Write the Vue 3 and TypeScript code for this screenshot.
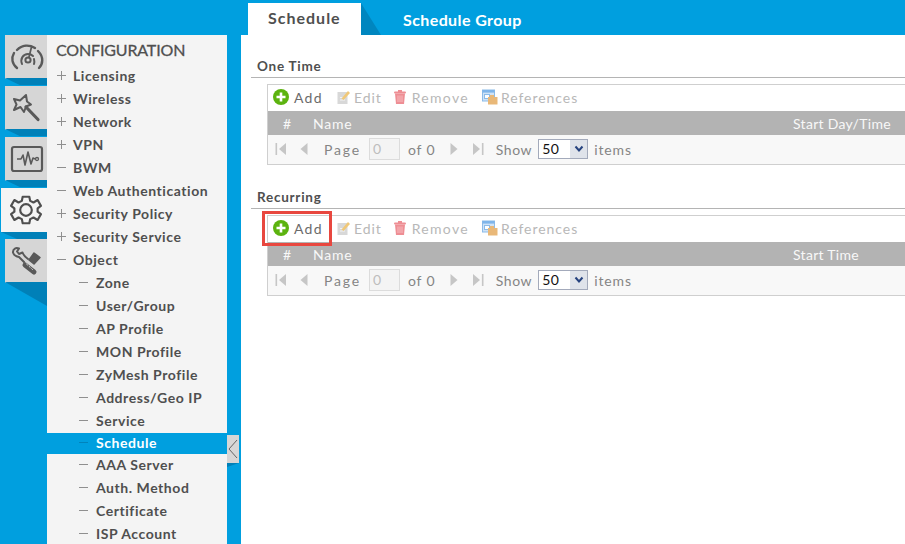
<script setup lang="ts">
const topItems = [
  { label: 'Licensing', mark: 'plus' },
  { label: 'Wireless', mark: 'plus' },
  { label: 'Network', mark: 'plus' },
  { label: 'VPN', mark: 'plus' },
  { label: 'BWM', mark: 'minus' },
  { label: 'Web Authentication', mark: 'minus' },
  { label: 'Security Policy', mark: 'plus' },
  { label: 'Security Service', mark: 'plus' },
  { label: 'Object', mark: 'minus' },
]
const subItems = ['Zone', 'User/Group', 'AP Profile', 'MON Profile', 'ZyMesh Profile', 'Address/Geo IP', 'Service', 'Schedule', 'AAA Server', 'Auth. Method', 'Certificate', 'ISP Account']
const sections = [
  { title: 'One Time', col: 'Start Day/Time', marked: false },
  { title: 'Recurring', col: 'Start Time', marked: true },
]
</script>

<template>
  <div class="page">
    <aside class="rail">
      <div class="rail-item">
        <svg viewBox="0 0 42 44" width="42" height="44" fill="none" stroke="#595959" stroke-width="2.400" stroke-linecap="round">
          <path d="M12 33C7 29 6 23 9 18M12 15C17 10 24 9.500 30 13M33 16C39 22 38 29 34 33" />
          <circle cx="23" cy="25" r="2.600" stroke-width="2" />
          <path d="M17 29C15 24 18 19 23 19C25 19 27 20 28 21M29 24C29.500 26 29.400 27.500 29 29" stroke-width="2" />
          <path d="M24 22L26.500 12" stroke-width="1.700" />
        </svg>
      </div>
      <div class="rail-item">
        <svg viewBox="0 0 42 44" width="42" height="44" fill="none" stroke="#595959" stroke-width="2" stroke-linejoin="round" stroke-linecap="round">
          <path d="M9 13L15 14.500L21 9L22 15.500L26 18.500L21 20.500L19 26L15.500 21L9 24L11.500 18.500Z" />
          <path d="M21 21L33 33.500" stroke-width="3.200" />
        </svg>
      </div>
      <div class="rail-item">
        <svg viewBox="0 0 42 44" width="42" height="44" fill="none" stroke="#595959" stroke-linejoin="round">
          <rect x="7" y="10" width="30" height="24" rx="2" stroke-width="2.200" />
          <path d="M12 22H16L18 18L20 28L23 15L26 27L28 21L30 22" stroke-width="1.600" />
          <circle cx="32" cy="22" r="1.500" stroke-width="1.300" />
        </svg>
      </div>
      <div class="rail-item active">
        <svg viewBox="0 0 46 44" width="46" height="44" fill="none" stroke="#4f4f4f" stroke-width="2.600" stroke-linejoin="round">
          <g transform="translate(25 22) scale(.83) translate(-24 -23)">
            <path d="M20 7H28L29 12L33 14L38 11L42 18L38 21V25L42 28L38 35L33 32L29 34L28 39H20L19 34L15 32L10 35L6 28L10 25V21L6 18L10 11L15 14L19 12Z" />
            <circle cx="24" cy="23" r="7" />
          </g>
        </svg>
      </div>
      <div class="rail-item tail">
        <svg viewBox="0 0 42 44" width="42" height="44" fill="none" stroke="#595959" stroke-linecap="round" stroke-linejoin="round">
          <path d="M8 13C8 9.500 11 8.500 14 9.500L12 12.500L14 15L17.500 13.500C18.500 16 20 18 23 20" stroke-width="2" />
          <path d="M8 13.500C9 16.500 11 17.500 14 18L19 23" stroke-width="2" />
          <path d="M20 26L29 33" stroke-width="5" />
          <path d="M21.500 25L27.500 30.500" stroke="#d6d6d6" stroke-width="1" stroke-dasharray="1.500 2" />
          <path d="M24 21L29 14L35 18.500L29 25Z" fill="#595959" stroke-width="1.500" />
        </svg>
      </div>
    </aside>

    <nav class="menu">
      <h2 class="menu-title">CONFIGURATION</h2>
      <ul class="tree">
        <li v-for="item in topItems" :key="item.label" class="row">
          <span class="mark" :class="{ plus: item.mark === 'plus' }"></span>{{ item.label }}
        </li>
        <li v-for="item in subItems" :key="item" class="row sub" :class="{ current: item === 'Schedule' }">
          <span class="mark"></span>{{ item }}
        </li>
      </ul>
      <button class="collapse" type="button" aria-label="Collapse">
        <svg viewBox="0 0 12 24" width="12" height="24" fill="none" stroke="#666" stroke-width="1"><path d="M10 3L2 12L10 21" /></svg>
      </button>
    </nav>

    <div class="content">
      <header class="tabs">
        <div class="tab on">Schedule</div>
        <div class="tab-fold"></div>
        <div class="tab off">Schedule Group</div>
      </header>
      <main class="panel">
        <section v-for="s in sections" :key="s.title" class="block">
          <h3 class="block-title">{{ s.title }}</h3>
          <div class="grid">
            <div class="toolbar">
              <span class="tool enabled">
                <svg viewBox="0 0 16 16" width="16" height="16"><circle cx="8" cy="8" r="8" fill="#5cb30f" /><path d="M8 3.500V12.500M3.500 8H12.500" stroke="#fff" stroke-width="2.600" /></svg>
                Add
              </span>
              <span class="tool edit">
                <svg viewBox="0 0 16 16" width="16" height="16"><rect x="1.500" y="3" width="10" height="12" fill="#d8d8d8" /><path d="M4 11H9M4 8.500H7" stroke="#f3f3f3" /><path d="M5.500 9.500L12 2L14 4L7.500 11Z" fill="#f0c878" /></svg>
                Edit
              </span>
              <span class="tool remove">
                <svg viewBox="0 0 16 16" width="16" height="16"><path d="M3 4.500H13L12 15H4Z" fill="#ee8e94" /><rect x="2" y="2.400" width="12" height="2" rx="1" fill="#ee8e94" /><rect x="6" y="1" width="4" height="2" fill="#ee8e94" /><path d="M6 6.500V13M8 6.500V13M10 6.500V13" stroke="#f8c6c9" stroke-width="0.800" /></svg>
                Remove
              </span>
              <span class="tool refs">
                <svg viewBox="0 0 16 16" width="16" height="16"><rect x="0.500" y="1" width="12" height="11" fill="#cfe3f7" stroke="#8cbbe8" /><rect x="0.500" y="1" width="12" height="2.600" fill="#7fb5ea" /><rect x="2.500" y="5.500" width="5" height="4" fill="#fff" stroke="#8cbbe8" /><path d="M6 8H15.500V15.500H6Z" fill="#e9b878" /><rect x="8" y="6" width="4" height="2.400" fill="#e9b878" /></svg>
                References
              </span>
            </div>
            <div class="head">
              <span class="h-num">#</span>
              <span class="h-name">Name</span>
              <span class="h-col">{{ s.col }}</span>
            </div>
            <div class="pager">
              <svg class="pg pg-first" viewBox="0 0 12 14" width="12" height="14" fill="#c6c6c6"><rect x="0.500" y="1" width="1.600" height="12" /><path d="M11 1V13L4 7Z" /></svg>
              <svg class="pg pg-prev" viewBox="0 0 8 14" width="8" height="14" fill="#c6c6c6"><path d="M7.500 1V13L0.500 7Z" /></svg>
              <span class="pg-label">Page</span>
              <span class="pg-input">0</span>
              <span class="pg-of">of 0</span>
              <svg class="pg pg-next" viewBox="0 0 8 14" width="8" height="14" fill="#c6c6c6"><path d="M0.500 1V13L7.500 7Z" /></svg>
              <svg class="pg pg-last" viewBox="0 0 12 14" width="12" height="14" fill="#c6c6c6"><rect x="9.900" y="1" width="1.600" height="12" /><path d="M1 1V13L8 7Z" /></svg>
              <span class="pg-show">Show</span>
              <span class="select">
                <span class="select-val">50</span>
                <span class="select-btn">
                  <svg viewBox="0 0 10 8" width="10" height="8" fill="none" stroke="#26437f" stroke-width="2"><path d="M1.500 1.500L5 5.500L8.500 1.500" /></svg>
                </span>
              </span>
              <span class="pg-items">items</span>
            </div>
            <div v-if="s.marked" class="callout"></div>
          </div>
        </section>
      </main>
    </div>
  </div>
</template>

<style>
html, body { margin: 0; background: #009fdf; overflow: hidden; }
</style>

<style scoped>
.page {
  width: 905px;
  height: 544px;
  display: flex;
  background: #009fdf;
  overflow: hidden;
  font-family: Lato, "Open Sans", sans-serif;
  color: #4f4f4f;
}
.rail {
  width: 47px;
  flex: none;
  padding-top: 35px;
  box-sizing: border-box;
}
.rail-item {
  position: relative;
  width: 42px;
  height: 44px;
  margin: 0 0 7px 5px;
  background: #d6d6d6;
  border-bottom: 1px solid #7fb9d6;
  box-sizing: border-box;
}
.rail-item::after {
  content: "";
  position: absolute;
  left: 0;
  top: 43px;
  width: 42px;
  height: 7px;
  background: #0080b8;
  clip-path: polygon(0 0, 100% 0, 100% 100%, 35% 100%);
}
.rail-item.tail::after { height: 24px; clip-path: polygon(0 0, 100% 0, 100% 100%); }
.rail-item.active {
  width: 46px;
  margin-left: 1px;
  background: #f4f4f4;
  border-bottom: 0;
}
.rail-item.active::after { width: 46px; top: 44px; }
.rail-item svg { display: block; }
.menu {
  position: relative;
  width: 180px;
  flex: none;
  margin-top: 35px;
  background: #f4f4f4;
}
.menu-title {
  margin: 0;
  padding: 5px 0 0 9px;
  height: 25px;
  box-sizing: border-box;
  font-size: 16px;
  font-weight: 400;
  line-height: 20px;
  letter-spacing: -0.15px;
  color: #4f4f4f;
  -webkit-text-stroke: 0.3px #4f4f4f;
}
.tree { list-style: none; margin: 5px 0 0; padding: 0; }
.row {
  height: 23px;
  line-height: 21px;
  padding-left: 26px;
  position: relative;
  font-size: 14px;
  font-weight: 700;
  letter-spacing: 0.55px;
  white-space: nowrap;
}
.mark {
  position: absolute;
  left: 10px;
  top: 10px;
  width: 9px;
  height: 1px;
  background: #8f8f8f;
}
.mark.plus::after {
  content: "";
  position: absolute;
  left: 4px;
  top: -4px;
  width: 1px;
  height: 9px;
  background: #8f8f8f;
}
.row.sub { padding-left: 49px; }
.row.sub .mark { left: 32px; }
.row.current {
  height: 21px;
  line-height: 19px;
  background: #009fdf;
  color: #fff;
}
.row.current .mark { background: #0083bb; top: 9px; }
.collapse {
  position: absolute;
  left: 180px;
  top: 400px;
  width: 12px;
  height: 28px;
  padding: 0;
  border: 0;
  background: #d6d6d6;
  display: flex;
  align-items: center;
}
.collapse::after {
  content: "";
  position: absolute;
  left: 0;
  top: 28px;
  width: 12px;
  height: 4px;
  background: #0080b8;
  clip-path: polygon(0 0, 100% 0, 0 100%);
}
.content {
  flex: 1;
  min-width: 0;
  display: flex;
  flex-direction: column;
  margin-left: 14px;
}
.tabs {
  height: 35px;
  flex: none;
  display: flex;
  align-items: flex-end;
  padding-left: 7px;
}
.tab {
  font-size: 16px;
  font-weight: 700;
  box-sizing: border-box;
}
.tab.on {
  width: 113px;
  height: 32px;
  background: #fff;
  color: #4f4f4f;
  padding-left: 20px;
  line-height: 30px;
  letter-spacing: 1px;
}
.tab-fold {
  width: 20px;
  height: 32px;
  background: #0086bf;
  clip-path: polygon(0 0, 100% 100%, 0 100%);
}
.tab.off {
  height: 32px;
  line-height: 34px;
  padding-left: 22px;
  color: #fff;
  letter-spacing: 0.4px;
}
.panel {
  flex: 1;
  background: #fff;
  padding: 20px 0 0 10px;
}
.block { margin-bottom: 21px; }
.block-title {
  margin: 0;
  height: 23px;
  box-sizing: border-box;
  border-bottom: 1px solid #b4b4b4;
  font-size: 13.5px;
  font-weight: 700;
  line-height: 23px;
  letter-spacing: 0.75px;
  padding-left: 6px;
  color: #4f4f4f;
}
.grid {
  position: relative;
  margin: 6px 0 0 16px;
  border: 1px solid #cfcfcf;
  border-right: 0;
  box-sizing: border-box;
}
.toolbar {
  height: 26px;
  display: flex;
  align-items: center;
  padding: 0 0 2px 5px;
  box-sizing: border-box;
  background: #fff;
}
.tool {
  display: flex;
  align-items: center;
  font-size: 14px;
  letter-spacing: 0.95px;
  color: #b8b8b8;
}
.tool.enabled { color: #6b6b6b; gap: 5px; letter-spacing: 1.3px; }
.tool.edit { margin-left: 13px; gap: 2px; }
.tool.remove { margin-left: 10px; gap: 4px; letter-spacing: 1.3px; }
.tool.refs { margin-left: 13px; gap: 3px; }
.head {
  height: 24px;
  display: flex;
  align-items: center;
  background: #b3b3b3;
  color: #f8f8f8;
  font-size: 14px;
  letter-spacing: 0.8px;
}
.h-num { margin-left: 15px; width: 30px; }
.h-name { flex: 1; }
.h-col { width: 112px; flex: none; letter-spacing: 0.3px; white-space: nowrap; }
.pager {
  height: 29px;
  display: flex;
  align-items: center;
  padding-bottom: 1px;
  box-sizing: border-box;
  background: #f8f8f8;
  font-size: 14px;
  letter-spacing: 0.9px;
  color: #858585;
}
.pg { flex: none; }
.pg-first { margin-left: 7px; }
.pg-prev { margin-left: 13px; }
.pg-label { margin-left: 16px; letter-spacing: 1.8px; }
.pg-input {
  width: 31px;
  height: 22px;
  margin-left: 8px;
  box-sizing: border-box;
  border: 1px solid #dcdcdc;
  background: #f4f4f4;
  color: #bdbdbd;
  padding-left: 3px;
  line-height: 20px;
}
.pg-of { margin-left: 8px; }
.pg-next { margin-left: 14px; }
.pg-last { margin-left: 14px; }
.pg-show { margin-left: 12px; letter-spacing: 0.6px; }
.select {
  display: flex;
  width: 50px;
  height: 20px;
  margin-left: 6px;
  box-sizing: border-box;
  border: 1px solid #a3aabb;
  background: #fff;
}
.select-val { flex: 1; color: #111; padding-left: 3px; line-height: 18px; letter-spacing: 0.4px; }
.select-btn {
  width: 17px;
  background: #dfe3ea;
  display: flex;
  align-items: center;
  justify-content: center;
}
.pg-items { margin-left: 6px; }
.callout {
  position: absolute;
  left: -6px;
  top: -5px;
  width: 70px;
  height: 35px;
  box-sizing: border-box;
  border: 3px solid #e8473f;
}
</style>
